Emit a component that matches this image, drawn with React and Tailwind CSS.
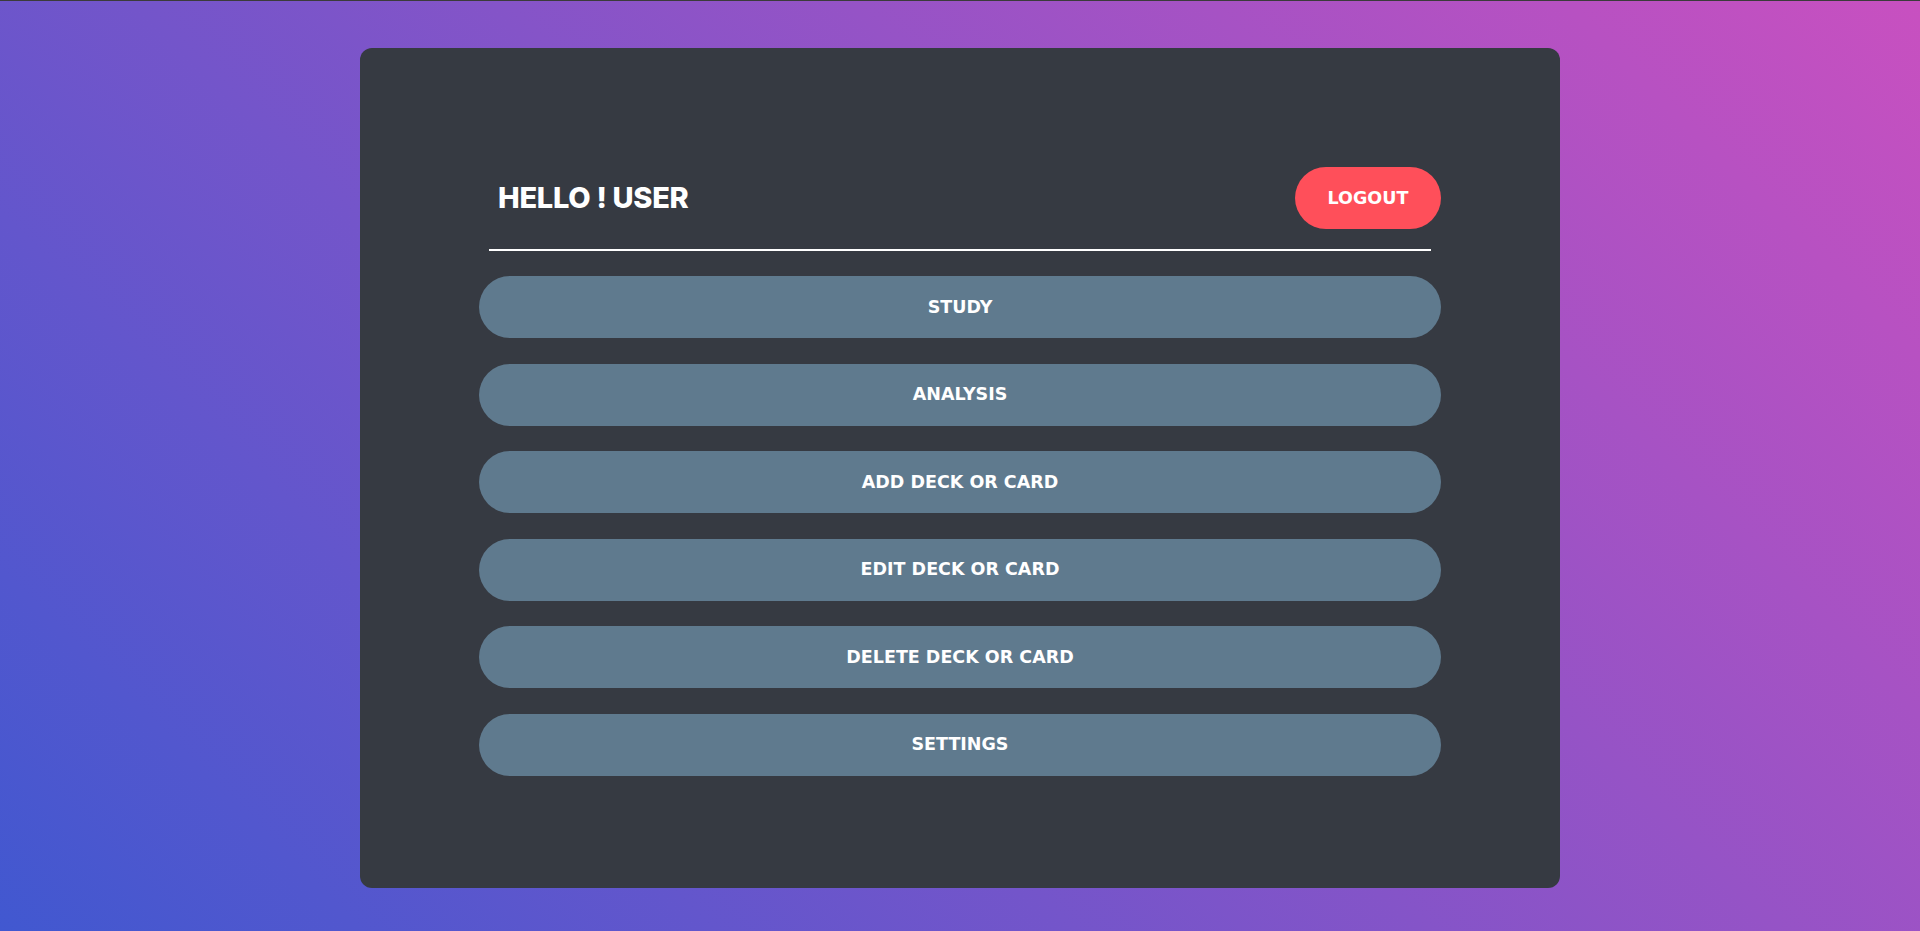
const items = ['STUDY', 'ANALYSIS', 'ADD DECK OR CARD', 'EDIT DECK OR CARD', 'DELETE DECK OR CARD', 'SETTINGS'];

export default function App() {
  return (
    <div className="min-h-[931px] border-t border-[#3b3b3b] bg-[linear-gradient(45deg,#4158d0,#c850c0)] pt-[47px] font-['DejaVu_Sans',sans-serif]">
      <div className="mx-auto w-[1200px] rounded-xl bg-[#363a42] px-[119px] pt-[119px] pb-[112px]">
        <div className="flex h-[62px] items-center justify-between">
          <h1 className="pl-[19px] font-['Inter',sans-serif] text-[29px] font-extrabold tracking-[-0.01em] text-white">
            HELLO ! USER
          </h1>
          <button className="h-[62px] w-[146px] rounded-full bg-[#ff4f5a] text-[17.5px] font-bold text-white">
            LOGOUT
          </button>
        </div>
        <div className="mx-[10px] mt-[20px] h-[2px] bg-white" />
        <div className="mt-[25px] flex flex-col gap-[25.5px]">
          {items.map((label) => (
            <button
              key={label}
              className="h-[62px] w-full rounded-full bg-[#5f7a8e] text-[17.5px] font-bold text-white"
            >
              {label}
            </button>
          ))}
        </div>
      </div>
    </div>
  );
}
